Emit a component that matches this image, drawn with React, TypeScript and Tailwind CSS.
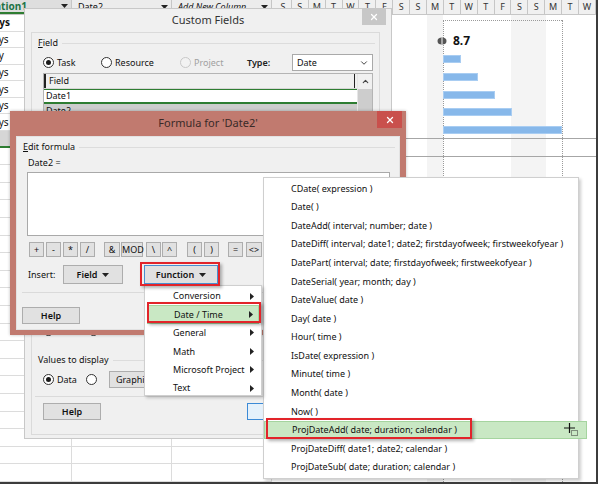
import type { ReactNode } from "react";
import { ChevronDown, ChevronUp, X } from "lucide-react";

const DAYS = "SSMTWTFSSMTWTFSSMTW".split("");

const DATE_FUNCS = [
  "CDate( expression )",
  "Date( )",
  "DateAdd( interval; number; date )",
  "DateDiff( interval; date1; date2; firstdayofweek; firstweekofyear )",
  "DatePart( interval; date; firstdayofweek; firstweekofyear )",
  "DateSerial( year; month; day )",
  "DateValue( date )",
  "Day( date )",
  "Hour( time )",
  "IsDate( expression )",
  "Minute( time )",
  "Month( date )",
  "Now( )",
  "ProjDateAdd( date; duration; calendar )",
  "ProjDateDiff( date1; date2; calendar )",
  "ProjDateSub( date; duration; calendar )",
];

const GROUPS = ["Conversion", "Date / Time", "General", "Math", "Microsoft Project", "Text"];

// operator buttons: label, width, gap before it
const OPS: { t: string; w: number; gap: number }[] = [
  { t: "+", w: 15, gap: 0 },
  { t: "-", w: 15, gap: 2 },
  { t: "*", w: 15, gap: 2 },
  { t: "/", w: 15, gap: 2 },
  { t: "&", w: 16, gap: 9 },
  { t: "MOD", w: 22, gap: 1 },
  { t: "\\", w: 15, gap: 3 },
  { t: "^", w: 15, gap: 1 },
  { t: "(", w: 15, gap: 10 },
  { t: ")", w: 15, gap: 2 },
  { t: "=", w: 15, gap: 9 },
  { t: "<>", w: 16, gap: 3 },
  { t: "<", w: 15, gap: 2 },
];

const BARS = [
  { top: 40, w: 18 },
  { top: 58, w: 35 },
  { top: 76, w: 52 },
  { top: 93, w: 69 },
  { top: 111, w: 119 },
];

function Radio({ on, disabled }: { on?: boolean; disabled?: boolean }) {
  return (
    <span
      className={`flex h-[11px] w-[11px] shrink-0 items-center justify-center rounded-full border ${
        disabled ? "border-[#c8c8c8] bg-[#f2f2f2]" : "border-[#333] bg-white"
      }`}
    >
      {on && <span className="h-[5px] w-[5px] rounded-full bg-[#1a1a1a]" />}
    </span>
  );
}

function Btn({ children, className = "" }: { children?: ReactNode; className?: string }) {
  return (
    <div className={`flex items-center justify-center border border-[#adadad] bg-[#e1e1e1] ${className}`}>
      {children}
    </div>
  );
}

function Caret() {
  return (
    <svg width="7" height="4" viewBox="0 0 7 4" className="shrink-0">
      <path d="M0 0h7L3.5 4z" fill="#222" />
    </svg>
  );
}

function SubArrow() {
  return (
    <svg width="4" height="7" viewBox="0 0 4 7" className="shrink-0">
      <path d="M0 0l4 3.5L0 7z" fill="#222" />
    </svg>
  );
}

function GroupLabel({ children, pl }: { children: ReactNode; pl: string }) {
  return (
    <div className={`flex h-[14px] items-center ${pl} pr-[4px]`}>
      <span className="leading-[14px]">{children}</span>
      <span className="ml-[4px] flex-1 border-t border-[#dcdcdc]" />
    </div>
  );
}

function Sheet() {
  const top = ["days", "days", "day", "days", "days", "days", "days"];
  return (
    <div className="flex w-[272px] shrink-0 flex-col">
      <div className="flex h-[15px] border-b border-[#c6c6c6] bg-[#ececec]">
        <div className="flex w-[72px] items-center justify-between overflow-hidden border-r border-b-2 border-r-[#c6c6c6] border-b-[#2e7d32] bg-[#dedede] pr-[3px]">
          <span className="-ml-[23px] text-[10px] font-bold text-[#217346]">Duration1</span>
          <Caret />
        </div>
        <div className="flex w-[100px] items-center justify-between border-r border-[#c6c6c6] pr-[3px] pl-[6px]">
          <span>Date2</span>
          <Caret />
        </div>
        <div className="flex w-[100px] items-center justify-between border-r border-[#c6c6c6] pr-[3px] pl-[6px]">
          <span className="italic">Add New Column</span>
          <Caret />
        </div>
      </div>
      {top.map((t, i) => (
        <div key={i} className="flex h-[18px] border-b border-[#dcdcdc]">
          <div className="flex w-[72px] items-center overflow-hidden border-r border-[#dcdcdc]">
            <span className={`-ml-[13px] text-[10px] ${i === 0 ? "font-bold" : ""}`}>{t}</span>
          </div>
          <div className="w-[100px] border-r border-[#dcdcdc]" />
          <div className="w-[100px] border-r border-[#dcdcdc]" />
        </div>
      ))}
      <div className="flex h-[18px] border-b-2 border-[#2e7d32] bg-[#d6d6d6]" />
      {Array.from({ length: 19 }, (_, i) => (
        <div key={i} className="flex h-[17.6px] shrink-0 border-b border-[#dcdcdc]">
          <div className="w-[72px] border-r border-[#dcdcdc]" />
          <div className="w-[100px] border-r border-[#dcdcdc]" />
          <div className="w-[100px] border-r border-[#dcdcdc]" />
        </div>
      ))}
    </div>
  );
}

function Gantt() {
  return (
    <div className="flex flex-1 flex-col">
      <div className="flex h-[15px] border-b border-[#c6c6c6] bg-[#f0f0f0] pl-[3px]">
        {DAYS.map((d, i) => (
          <div
            key={i}
            className="flex w-[16.9px] shrink-0 items-center justify-center border-r border-[#c6c6c6] text-[9px] text-[#333]"
          >
            {d}
          </div>
        ))}
      </div>
      <div className="relative flex-1">
        <div className="absolute top-0 bottom-0 left-[155px] w-[16px] bg-[#f4f4f4]" />
        <div className="absolute top-0 bottom-0 left-[239px] w-[35px] bg-[#f4f4f4]" />
        <div className="relative mt-[123px] h-[19px] border-y border-[#a6a6a6]" />
        <div className="absolute top-[5px] bottom-0 left-[171px] border-l border-dotted border-[#9a9a9a]" />
        <div className="absolute top-[5px] bottom-0 left-[290px] border-l border-dotted border-[#9a9a9a]" />
        <div className="absolute top-[5px] left-[171px] w-[119px] border-t border-dotted border-[#9a9a9a]" />
        <svg width="10" height="8" viewBox="0 0 10 8" className="absolute top-[22px] left-[165px]">
          <ellipse cx="5" cy="4" rx="4.5" ry="3.5" fill="#555" />
          <path d="M5 0.5v7" stroke="#ddd" strokeWidth="1.2" />
        </svg>
        <span className="absolute top-[19px] left-[181px] text-[12px] leading-[14px] font-bold text-[#111]">8.7</span>
        {BARS.map((b, i) => (
          <div
            key={i}
            className="absolute left-[171px] h-[8px] border border-[#a9cdf2] bg-[#87b8ea]"
            style={{ top: b.top, width: b.w }}
          />
        ))}
      </div>
    </div>
  );
}

function CustomFields() {
  return (
    <div className="absolute top-[8px] left-[24px] flex h-[431px] w-[368px] flex-col border border-[#c8c8c8] bg-[#f0f0f0]">
      <div className="relative flex h-[23px] shrink-0 items-center justify-center">
        <span className="text-[11px] text-[#333]">Custom Fields</span>
        <div className="absolute top-[-1px] right-[5px] flex h-[17px] w-[24px] items-center justify-center bg-[#c7c7c7]">
          <X size={10} strokeWidth={3} color="#fff" />
        </div>
      </div>
      <div className="mr-[11px] ml-[6px] flex h-[403px] flex-col border border-[#dadada] bg-[#f0f0f0]">
        <div className="mt-[3px]">
          <GroupLabel pl="pl-[6px]">
            <span className="underline underline-offset-1">F</span>ield
          </GroupLabel>
        </div>
        <div className="mt-[4px] flex h-[17px] items-center pl-[11px]">
          <div className="flex w-[58px] items-center gap-[3px]">
            <Radio on />
            <span>Task</span>
          </div>
          <div className="flex w-[79px] items-center gap-[3px]">
            <Radio />
            <span>Resource</span>
          </div>
          <div className="flex w-[67px] items-center gap-[3px] text-[#a0a0a0]">
            <Radio disabled />
            <span>Project</span>
          </div>
          <div className="w-[45px] font-semibold text-[#222]">Type:</div>
          <div className="flex h-[17px] w-[81px] items-center justify-between border border-[#a9a9a9] bg-white pr-[3px] pl-[4px]">
            <span>Date</span>
            <ChevronDown size={10} strokeWidth={2.2} color="#333" />
          </div>
        </div>
        <div className="mt-[2px] ml-[11px] flex h-[240px] w-[330px] border border-[#b4b4b4] bg-white">
          <div className="flex flex-1 flex-col">
            <div className="flex h-[15px] border-b border-[#d6d6d6] bg-[#f0f0f0]">
              <div className="flex flex-1 items-center border-r border-l-2 border-r-[#222] border-l-[#222] pl-[3px]">
                Field
              </div>
              <div className="w-[2px]" />
            </div>
            <div className="flex h-[14px] items-center border-y border-[#2e7d32] bg-white pl-[2px]">Date1</div>
            <div className="flex h-[14px] items-center border-t border-[#2e7d32] bg-[#cdcdcd] pl-[2px]">Date2</div>
          </div>
          <div className="flex w-[15px] flex-col border-l border-[#e6e6e6]">
            <div className="flex h-[15px] items-center justify-center bg-[#f0f0f0]">
              <ChevronUp size={9} strokeWidth={3} color="#444" />
            </div>
            <div className="flex-1 bg-[#cdcdcd]" />
          </div>
        </div>
        <div className="mt-[11px] flex h-[12px] items-center pl-[11px]">
          <div className="w-[45px]">
            <Radio />
          </div>
          <Radio />
        </div>
        <div className="mt-[17px]">
          <GroupLabel pl="pl-[6px]">Values to display</GroupLabel>
        </div>
        <div className="mt-[4px] flex h-[17px] items-center pl-[11px]">
          <div className="flex w-[43px] items-center gap-[3px]">
            <Radio on />
            <span>Data</span>
          </div>
          <div className="w-[23px]">
            <Radio />
          </div>
          <Btn className="h-[17px] w-[110px] justify-start! pl-[6px]">Graphical Indicators...</Btn>
        </div>
        <div className="mt-[8px] mr-[3px] ml-[3px] border-t border-[#dadada]" />
        <div className="mt-[6px] flex h-[17px] items-center pl-[11px]">
          <Btn className="h-[17px] w-[58px] font-semibold">Help</Btn>
          <div className="ml-[146px] flex h-[17px] w-[70px] items-center justify-center border border-[#3c8ad6] bg-[#e5f1fb]">
            OK
          </div>
        </div>
      </div>
    </div>
  );
}

function FormulaDialog() {
  return (
    <div className="absolute top-[111px] left-[10px] flex h-[224px] w-[396px] flex-col bg-[#c17a6f] shadow-[0_0_3px_rgba(0,0,0,0.25)]">
      <div className="relative flex h-[25px] shrink-0 items-center justify-center">
        <span className="text-[11px] text-[#3a2a28]">Formula for 'Date2'</span>
        <div className="absolute top-0 right-[4px] flex h-[17px] w-[25px] items-center justify-center bg-[#c9504c]">
          <X size={10} strokeWidth={3} color="#fff" />
        </div>
      </div>
      <div className="mx-[6px] flex h-[194px] flex-col border border-[#e2e2e2] bg-[#f0f0f0]">
        <div className="mt-[3px]">
          <GroupLabel pl="pl-[6px]">
            <span className="underline underline-offset-1">E</span>dit formula
          </GroupLabel>
        </div>
        <div className="mt-[2px] flex h-[14px] items-center pl-[11px]">Date2 =</div>
        <div className="mt-[2px] ml-[10px] h-[64px] w-[363px] border border-[#a9a9a9] bg-white" />
        <div className="mt-[6px] flex h-[15px] pl-[12px]">
          {OPS.map((o) => (
            <Btn key={o.t} className="h-[15px] shrink-0 text-[9px]" >
              <span className="text-center" style={{ width: o.w - 2 }}>
                {o.t}
              </span>
            </Btn>
          )).map((el, i) => (
            <div key={i} className="flex" style={{ marginLeft: OPS[i].gap }}>
              {el}
            </div>
          ))}
        </div>
        <div className="mt-[8px] flex h-[19px] items-center pl-[11px]">
          <span className="w-[35px]">Insert:</span>
          <Btn className="h-[19px] w-[60px] gap-[5px] font-semibold">
            Field <Caret />
          </Btn>
          <div className="ml-[21px] flex h-[19px] w-[74px] items-center justify-center gap-[5px] border border-[#4a8fd0] bg-[#e1e1e1] font-semibold">
            Function <Caret />
          </div>
        </div>
        <div className="mt-[8px] ml-[5px] border-t border-[#dadada]" />
        <div className="mt-[14px] pl-[5px]">
          <Btn className="h-[17px] w-[58px] font-semibold">Help</Btn>
        </div>
      </div>
    </div>
  );
}

function FunctionMenu() {
  return (
    <div className="absolute top-[285px] left-[144px] flex h-[111px] w-[118px] flex-col border border-[#cfcfcf] bg-white py-[1px] shadow-[2px_2px_3px_rgba(0,0,0,0.2)]">
      {GROUPS.map((g) => (
        <div
          key={g}
          className={`mx-[2px] flex h-[18.4px] shrink-0 items-center justify-between pr-[5px] pl-[26px] ${
            g === "Date / Time" ? "border border-[#a5d49f] bg-[#c9e8c4]" : ""
          }`}
        >
          <span className="text-[#111]">{g}</span>
          <SubArrow />
        </div>
      ))}
    </div>
  );
}

function DateMenu() {
  return (
    <div className="absolute top-[177px] left-[263px] flex h-[302px] w-[316px] flex-col border border-[#cfcfcf] bg-white pt-[1px] shadow-[2px_2px_3px_rgba(0,0,0,0.2)]">
      {DATE_FUNCS.map((f) => (
        <div
          key={f}
          className={`flex h-[18.6px] shrink-0 items-center pl-[27px] ${
            f.startsWith("ProjDateAdd") ? "-mr-[9px] border border-[#a5d49f] bg-[#c9e8c4]" : ""
          }`}
        >
          <span className="whitespace-nowrap text-[#111]">{f}</span>
        </div>
      ))}
    </div>
  );
}

export default function App() {
  return (
    <div className="relative h-[484px] w-[598px] overflow-hidden border-r-2 border-b-2 border-[#3c3c3c] bg-white font-['Noto_Sans',sans-serif] text-[9px] text-[#111]">
      <div className="flex h-full">
        <Sheet />
        <Gantt />
      </div>
      <CustomFields />
      <FormulaDialog />
      <DateMenu />
      <FunctionMenu />
      <div className="absolute top-[262px] left-[140px] h-[24px] w-[80px] border-2 border-[#e2242a] shadow-[2px_2px_3px_rgba(0,0,0,0.3)]" />
      <div className="absolute top-[302px] left-[147px] h-[21px] w-[114px] border-2 border-[#e2242a] shadow-[2px_2px_3px_rgba(0,0,0,0.3)]" />
      <div className="absolute top-[418px] left-[266px] h-[21px] w-[206px] border-2 border-[#e2242a] shadow-[2px_2px_3px_rgba(0,0,0,0.3)]" />
      <svg width="16" height="14" viewBox="0 0 16 14" className="absolute top-[423px] left-[563px]">
        <path d="M1 5h11M6.5 0v10" stroke="#111" strokeWidth="1.2" />
        <rect x="8.5" y="7.5" width="6" height="5" fill="none" stroke="#333" strokeDasharray="1 1" />
      </svg>
    </div>
  );
}
